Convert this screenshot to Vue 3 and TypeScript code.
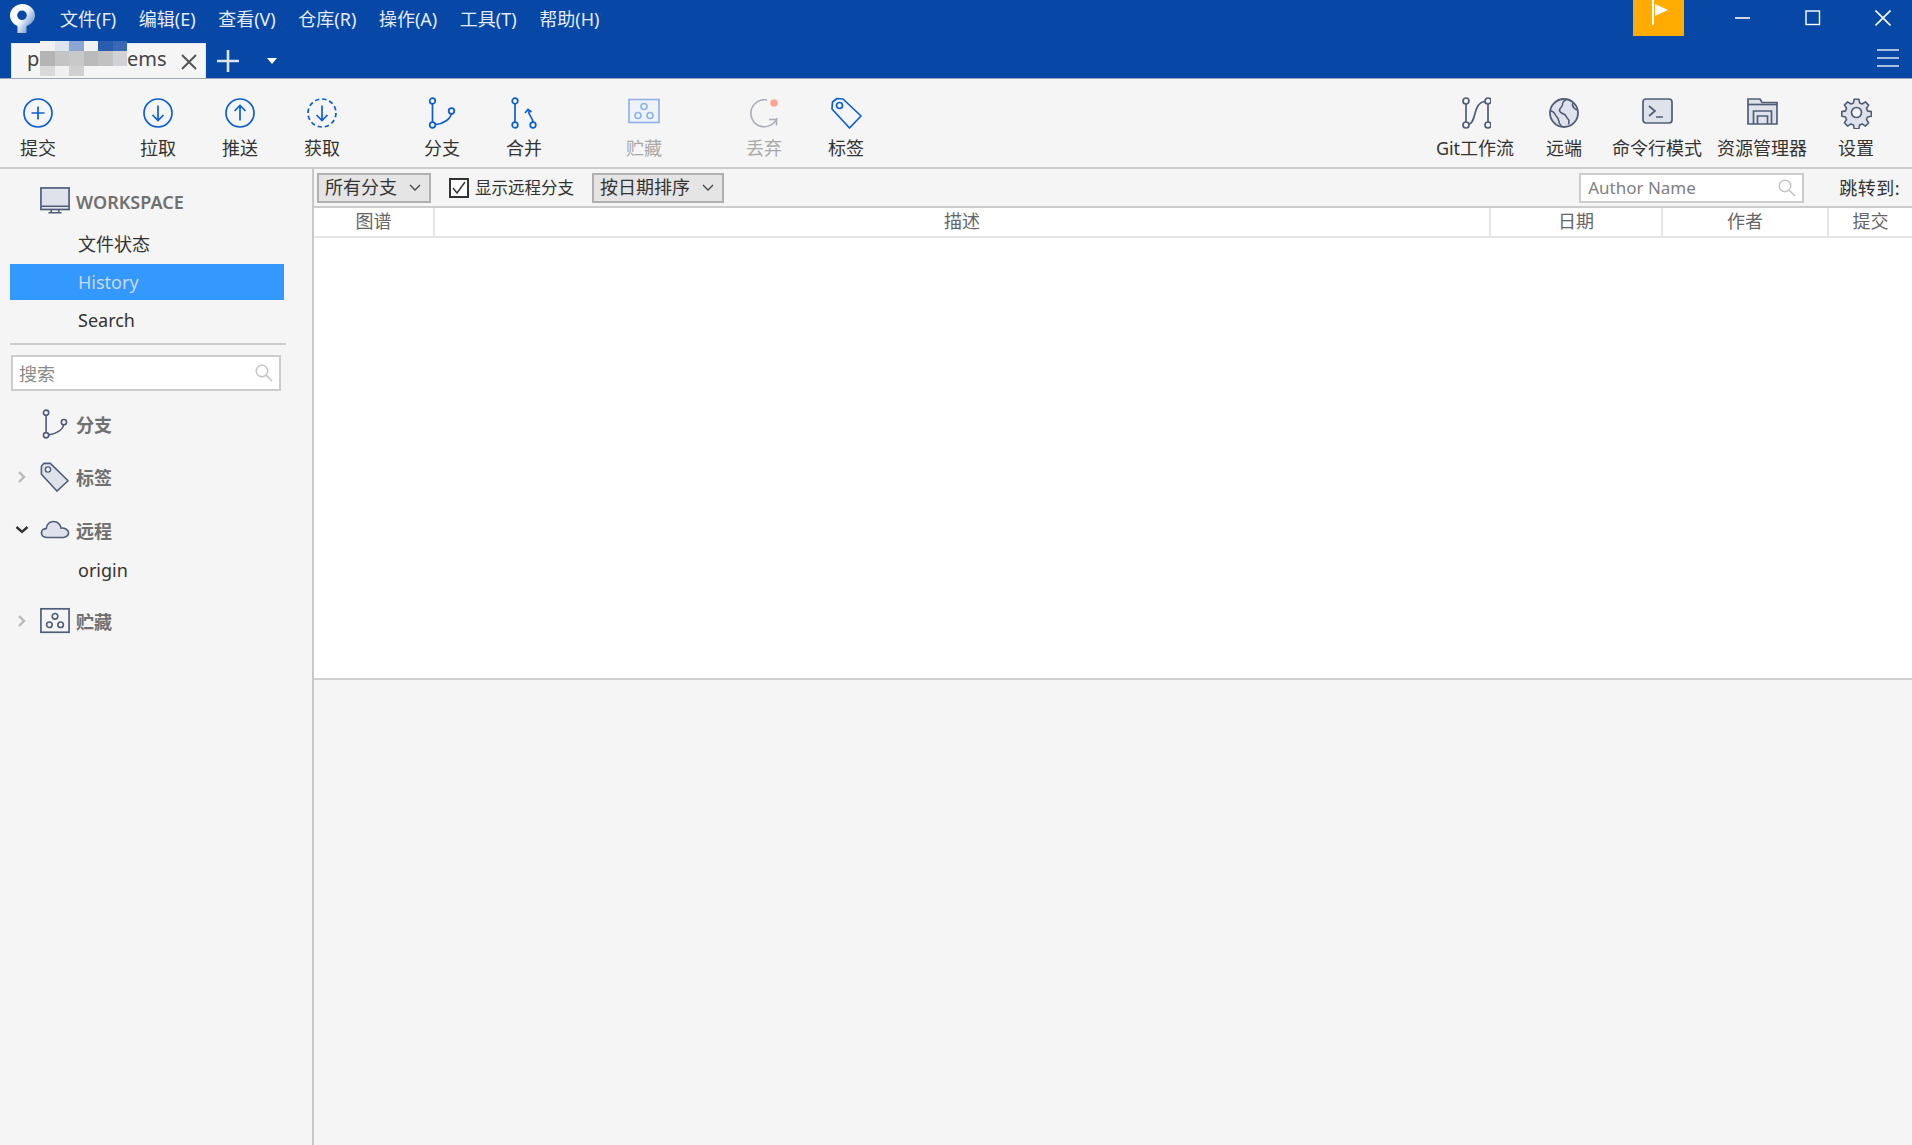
<script setup lang="ts">
// SourceTree-style repository window: title bar, toolbar, sidebar, history table
const MENUS = ['文件(F)', '编辑(E)', '查看(V)', '仓库(R)', '操作(A)', '工具(T)', '帮助(H)']

const BLUE = 'fill="none" stroke="#0c5fd0" stroke-width="1.7"'
const SLATE = 'fill="#dfe2ea" stroke="#4f5d78" stroke-width="1.7"'
const SLATE_LINE = 'fill="none" stroke="#4f5d78" stroke-width="1.7"'

const branch = (a: string) =>
  `<g ${a}><circle cx="6.5" cy="4" r="2.8"/><circle cx="6.5" cy="28" r="2.8"/><circle cx="25.5" cy="14" r="2.8"/><path d="M6.5 6.8V25.2M9.3 27.6C17 27 24.5 22 25.2 16.8"/></g>`

const ICONS: Record<string, string> = {
  commit: `<g ${BLUE}><circle cx="16" cy="16" r="14"/><path d="M16 9.5v13M9.5 16h13"/></g>`,
  pull: `<g ${BLUE}><circle cx="16" cy="16" r="14"/><path d="M16 8.5v15M10.5 18l5.5 5.5 5.5-5.5"/></g>`,
  push: `<g ${BLUE}><circle cx="16" cy="16" r="14"/><path d="M16 23.5v-15M10.5 14l5.5-5.5 5.5 5.5"/></g>`,
  fetch: `<g ${BLUE}><circle cx="16" cy="16" r="14" stroke-dasharray="4.4 2.9"/><path d="M16 8.5v15M10.5 18l5.5 5.5 5.5-5.5"/></g>`,
  branch: branch(BLUE),
  merge: `<g ${BLUE}><circle cx="7" cy="4" r="2.8"/><circle cx="7" cy="28" r="2.8"/><circle cx="25" cy="28" r="2.8"/><path d="M7 6.8v18.4M25 25.2c0-4-4-6-4.5-11M17 16l3-3.5 3.5 2.5"/></g>`,
  stash: `<g fill="none" stroke="#8fb0ea" stroke-width="1.6"><rect x="1" y="2.5" width="30" height="23" fill="#eef2f9"/><circle cx="16" cy="9.5" r="3"/><circle cx="10" cy="18.5" r="3"/><circle cx="22" cy="18.5" r="3"/></g>`,
  discard: `<g fill="none" stroke="#a8adb8" stroke-width="1.6"><path d="M19 3A13.5 13.5 0 1 0 29 21"/><path d="M21 22.5h7.5v6"/></g><circle cx="26" cy="6" r="3.8" fill="#ffa594"/>`,
  tag: `<g ${BLUE}><path d="M2.5 5 7 1.5 13 2 31 19 19.5 31 2 12Z" stroke-linejoin="round"/><circle cx="9.5" cy="8.5" r="3"/></g>`,
  flow: `<g ${SLATE_LINE}><circle cx="7" cy="4" r="3"/><circle cx="7" cy="28" r="3"/><circle cx="29" cy="4" r="3"/><circle cx="29" cy="28" r="3"/><path d="M7 7v18M29 7v18M9.8 27C18 26 13 6 26 4.5"/></g>`,
  remote: `<circle cx="16" cy="16" r="14" fill="#dfe2ea" stroke="#4f5d78" stroke-width="1.8"/><path d="M18 2.5c-2 2-4 2-3.5 5 .5 2-3 3-3 6 0 2 3 3 5 4s2 4 4 5c1 1 .5 3 0 5M2.5 14c3 0 4 2 5 4s3 3 3 5 1 4 3 6.5M25 6c-1 2 0 4 1 5s2 2 4 2" fill="none" stroke="#4f5d78" stroke-width="1.6"/>`,
  terminal: `<rect x="2" y="2" width="29" height="24" rx="3" ${SLATE}/><path d="M8 9l6 5-6 5M15 20h7" ${SLATE_LINE}/>`,
  explorer: `<path d="M2 27V2h12l2 3.500h15V27Z" ${SLATE}/><path d="M2 7.500h29" ${SLATE_LINE}/><path d="M7.500 27V14h18v13M11.500 27v-8h10v8" ${SLATE_LINE}/>`,
  settings: `<path d="M13.500 1.800h5l.8 4 2.700 1.100 3.400-2.300 3.500 3.500-2.300 3.400 1.100 2.700 4 .8v5l-4 .8-1.100 2.700 2.300 3.400-3.500 3.500-3.400-2.300-2.700 1.100-.8 4h-5l-.8-4-2.700-1.100-3.400 2.300-3.500-3.500 2.300-3.400-1.100-2.700-4-.8v-5l4-.8 1.100-2.700-2.300-3.400 3.500-3.500 3.400 2.300 2.700-1.100Z" ${SLATE} stroke-linejoin="round" transform="translate(1.500 .5) scale(.94)"/><circle cx="16.500" cy="15.500" r="5" fill="#f5f5f5" stroke="#4f5d78" stroke-width="1.7"/>`,
  monitor: `<rect x="1" y="1" width="30" height="23" fill="#dfe2ea" stroke="#4f5d78" stroke-width="1.8"/><path d="M1 20.500h30M9 27.500h14M12 24v3M20 24v3" ${SLATE_LINE}/>`,
  sideBranch: branch(SLATE_LINE),
  sideTag: `<path d="M1.500 4.500 4 1.500 11 1.500 30 20 18 31 1.500 13Z" ${SLATE} stroke-linejoin="round"/><circle cx="8.500" cy="8" r="2.800" fill="#f5f5f5" stroke="#4f5d78" stroke-width="1.500"/>`,
  cloud: `<path d="M8 24C3.500 24 1.500 21.500 1.500 19 1.500 16 4 14.500 6.500 14.500 7.500 9.500 11 7 14.500 7 19 7 22 10.500 22.500 14 26.500 13.500 30.500 16 30.500 19 30.500 22 27.500 24 25 24Z" ${SLATE}/>`,
  sideStash: `<rect x="1" y="3" width="30" height="25" fill="#f5f5f5" stroke="#4f5d78" stroke-width="1.800"/><g ${SLATE_LINE}><circle cx="16" cy="11" r="3"/><circle cx="10" cy="20" r="3"/><circle cx="22" cy="20" r="3"/></g>`,
}

interface Tool { label: string; icon: string; width: number; gap?: number; dim?: boolean }

const LEFT_TOOLS: Tool[] = [
  { label: '提交', icon: 'commit', width: 76 },
  { label: '拉取', icon: 'pull', width: 82, gap: 41 },
  { label: '推送', icon: 'push', width: 82 },
  { label: '获取', icon: 'fetch', width: 82 },
  { label: '分支', icon: 'branch', width: 82, gap: 38 },
  { label: '合并', icon: 'merge', width: 82 },
  { label: '贮藏', icon: 'stash', width: 82, gap: 38, dim: true },
  { label: '丢弃', icon: 'discard', width: 82, gap: 38, dim: true },
  { label: '标签', icon: 'tag', width: 82 },
]

const RIGHT_TOOLS: Tool[] = [
  { label: 'Git工作流', icon: 'flow', width: 96 },
  { label: '远端', icon: 'remote', width: 82 },
  { label: '命令行模式', icon: 'terminal', width: 104 },
  { label: '资源管理器', icon: 'explorer', width: 106 },
  { label: '设置', icon: 'settings', width: 82 },
]

// blurred-out part of the tab title
const MOSAIC = [
  ['#f1f1f1', '#dce3ef', '#8ba6d4', '#f2f2f2', '#2a5cae', '#3a68b4'],
  ['#b4b4b4', '#c4c4c4', '#c9c9c9', '#bababa', '#c2c2c2', '#d0d2d8'],
  ['#d9d9d9', '#f0f0f0', '#d0d0d0', 'transparent', 'transparent', 'transparent'],
]

const COLUMNS = [
  { label: '图谱', width: 121 },
  { label: '描述', width: 1056 },
  { label: '日期', width: 172 },
  { label: '作者', width: 166 },
  { label: '提交', width: 83 },
]
</script>

<template>
  <div class="app">
    <header class="titlebar">
      <div class="menu-row">
        <svg class="logo" viewBox="0 0 25 29">
          <defs>
            <linearGradient id="logo-fade" x1="0.45" y1="0.45" x2="1" y2="0.85">
              <stop offset="0" stop-color="#fff" />
              <stop offset="1" stop-color="#4f7cc4" />
            </linearGradient>
          </defs>
          <path fill="url(#logo-fade)" fill-rule="evenodd" d="M12.500 0C5.600 0 0 5.200 0 11.500c0 4.600 3 8.500 7.500 10.500V29h9v-7C21.500 20 25 16.200 25 11.500 25 5.200 19.400 0 12.500 0Zm-.5 6.500a4.800 4.800 0 1 1 0 9.600 4.800 4.800 0 0 1 0-9.600Z" />
        </svg>
        <nav class="menus">
          <span v-for="m in MENUS" :key="m" class="menu">{{ m }}</span>
        </nav>
        <div class="flag">
          <svg width="16" height="25" viewBox="0 0 16 25">
            <path d="M1 0v25" stroke="#fff" stroke-width="2" />
            <path fill="#fff" d="M3 4l13 6-13 6z" />
          </svg>
        </div>
        <div class="win-controls">
          <svg width="16" height="16" viewBox="0 0 16 16"><path d="M0 8h15" stroke="#fff" stroke-width="1.600" /></svg>
          <svg width="16" height="16" viewBox="0 0 16 16"><rect x="1" y="1" width="13.500" height="13.500" fill="none" stroke="#fff" stroke-width="1.400" /></svg>
          <svg width="16" height="16" viewBox="0 0 16 16"><path d="M.5.5l15 15M15.500.5l-15 15" stroke="#fff" stroke-width="1.600" /></svg>
        </div>
      </div>
      <div class="tab-row">
        <div class="tab">
          <span class="tab-title">p</span>
          <span class="tab-title tab-end">ems</span>
          <svg class="tab-close" width="16" height="16" viewBox="0 0 16 16"><path d="M1 1l14 14M15 1L1 15" stroke="#555" stroke-width="2" /></svg>
          <div class="mosaic">
            <template v-for="(row, r) in MOSAIC" :key="r">
              <i v-for="(c, i) in row" :key="i" :style="{ background: c }"></i>
            </template>
          </div>
        </div>
        <svg class="tab-plus" width="22" height="22" viewBox="0 0 22 22"><path d="M11 0v22M0 11h22" stroke="#dfe6f3" stroke-width="2.600" /></svg>
        <span class="tab-caret"></span>
        <svg class="hamburger" width="22" height="18" viewBox="0 0 22 18"><path d="M0 1h22M0 9h22M0 17h22" stroke="#dfe6f3" stroke-width="1.600" /></svg>
      </div>
    </header>

    <section class="toolbar">
      <div v-for="t in LEFT_TOOLS" :key="t.label" class="tool" :class="{ dim: t.dim }" :style="{ width: t.width + 'px', marginLeft: (t.gap ?? 0) + 'px' }">
        <svg class="tool-icon" viewBox="0 0 32 32" v-html="ICONS[t.icon]"></svg>
        <span>{{ t.label }}</span>
      </div>
      <div class="tools-right">
        <div v-for="t in RIGHT_TOOLS" :key="t.label" class="tool" :style="{ width: t.width + 'px' }">
          <svg class="tool-icon" viewBox="0 0 32 32" v-html="ICONS[t.icon]"></svg>
          <span>{{ t.label }}</span>
        </div>
      </div>
    </section>

    <div class="body">
      <aside class="sidebar">
        <div class="side-head workspace">
          <svg class="side-icon" viewBox="0 0 32 32" v-html="ICONS.monitor"></svg>
          <span class="ws-label">WORKSPACE</span>
        </div>
        <div class="side-item">文件状态</div>
        <div class="side-item active">History</div>
        <div class="side-item">Search</div>
        <div class="side-divider"></div>
        <div class="side-search">
          <span>搜索</span>
          <svg width="18" height="18" viewBox="0 0 18 18"><circle cx="7" cy="7" r="5.800" fill="none" stroke="#c4c4c4" stroke-width="1.400" /><path d="M11.200 11.200 17 17" stroke="#c4c4c4" stroke-width="1.600" /></svg>
        </div>

        <div class="side-head group first">
          <svg class="side-icon" viewBox="0 0 32 32" v-html="ICONS.sideBranch"></svg>
          <span>分支</span>
        </div>
        <div class="side-head group">
          <svg class="chev" width="10" height="14" viewBox="0 0 10 14"><path d="M2 2l5 5-5 5" fill="none" stroke="#bbb" stroke-width="2.400" /></svg>
          <svg class="side-icon" viewBox="0 0 32 32" v-html="ICONS.sideTag"></svg>
          <span>标签</span>
        </div>
        <div class="side-head group">
          <svg class="chev down" width="14" height="10" viewBox="0 0 14 10"><path d="M1.500 2l5.500 5 5.500-5" fill="none" stroke="#333" stroke-width="2.400" /></svg>
          <svg class="side-icon" viewBox="0 0 32 32" v-html="ICONS.cloud"></svg>
          <span>远程</span>
        </div>
        <div class="side-item origin">origin</div>
        <div class="side-head group stash">
          <svg class="chev" width="10" height="14" viewBox="0 0 10 14"><path d="M2 2l5 5-5 5" fill="none" stroke="#bbb" stroke-width="2.400" /></svg>
          <svg class="side-icon" viewBox="0 0 32 32" v-html="ICONS.sideStash"></svg>
          <span>贮藏</span>
        </div>
      </aside>

      <main class="main">
        <div class="filters">
          <div class="select first-select">
            <span>所有分支</span>
            <svg width="12" height="8" viewBox="0 0 12 8"><path d="M1 1l5 5 5-5" fill="none" stroke="#444" stroke-width="1.300" /></svg>
          </div>
          <label class="check">
            <span class="box"><svg width="16" height="16" viewBox="0 0 16 16"><path d="M2 8l4 5 8-11" fill="none" stroke="#333" stroke-width="1.400" /></svg></span>
            <span class="check-label">显示远程分支</span>
          </label>
          <div class="select second-select">
            <span>按日期排序</span>
            <svg width="12" height="8" viewBox="0 0 12 8"><path d="M1 1l5 5 5-5" fill="none" stroke="#444" stroke-width="1.300" /></svg>
          </div>
          <div class="author">
            <span>Author Name</span>
            <svg width="18" height="18" viewBox="0 0 18 18"><circle cx="7" cy="7" r="5.800" fill="none" stroke="#c4c4c4" stroke-width="1.400" /><path d="M11.200 11.200 17 17" stroke="#c4c4c4" stroke-width="1.600" /></svg>
          </div>
          <span class="jump">跳转到:</span>
        </div>
        <div class="table-pane">
          <div class="table-head">
            <div v-for="c in COLUMNS" :key="c.label" class="col" :style="{ width: c.width + 'px' }">{{ c.label }}</div>
          </div>
        </div>
        <div class="detail-pane"></div>
      </main>
    </div>
  </div>
</template>

<style scoped>
.app {
  width: 1912px;
  height: 1145px;
  display: flex;
  flex-direction: column;
  overflow: hidden;
  background: #f5f5f5;
  font-family: "Noto Sans", "Noto Sans CJK SC", sans-serif;
  font-size: 18px;
  color: #333;
}
.titlebar {
  height: 78px;
  flex: none;
  background: #0747a6;
  color: #fff;
}
.menu-row {
  height: 43px;
  display: flex;
  align-items: flex-start;
}
.logo {
  width: 25px;
  height: 29px;
  margin: 4px 0 0 10px;
  flex: none;
}
.menus {
  display: flex;
  gap: 22.600px;
  margin-left: 25px;
  height: 36px;
  align-items: center;
}
.menu {
  color: #e6ecf6;
  white-space: nowrap;
}
.flag {
  width: 51px;
  height: 36px;
  margin-left: auto;
  padding-left: 3px;
  box-sizing: border-box;
  background: #ffab00;
  display: flex;
  justify-content: center;
  align-items: flex-start;
  flex: none;
}
.win-controls {
  display: flex;
  gap: 54px;
  height: 36px;
  align-items: center;
  padding: 0 21px 0 51px;
}
.tab-row {
  height: 35px;
  display: flex;
  align-items: center;
  position: relative;
}
.tab {
  position: relative;
  width: 195px;
  height: 35px;
  margin-left: 11px;
  background: #f5f5f5;
  border: 1px solid #e2e6ee;
  border-bottom: 0;
  box-sizing: border-box;
  color: #444;
  font-size: 20px;
  flex: none;
}
.tab-title {
  position: absolute;
  left: 15px;
  top: 1px;
}
.tab-end {
  left: 115px;
}
.tab-close {
  position: absolute;
  left: 169px;
  top: 10px;
}
.mosaic {
  position: absolute;
  left: 28px;
  top: -3px;
  width: 87px;
  height: 35px;
  display: grid;
  grid-template-columns: repeat(6, 1fr);
  grid-template-rows: 10px 15px 10px;
}
.tab-plus {
  margin-left: 11px;
  flex: none;
}
.tab-caret {
  width: 0;
  height: 0;
  margin-left: 28px;
  border-left: 5px solid transparent;
  border-right: 5px solid transparent;
  border-top: 6px solid #fff;
}
.hamburger {
  margin: 0 13px 5px auto;
  flex: none;
}
.toolbar {
  height: 91px;
  flex: none;
  display: flex;
  box-sizing: border-box;
  border-top: 1px solid #9aa5b8;
  border-bottom: 2px solid #ccc;
  padding-top: 18px;
}
.tool {
  display: flex;
  flex-direction: column;
  align-items: center;
  flex: none;
  white-space: nowrap;
}
.tool-icon {
  width: 32px;
  height: 32px;
  margin-bottom: 5px;
}
.tool.dim {
  color: #a9a9a9;
}
.tools-right {
  display: flex;
  margin-left: auto;
  padding-right: 15px;
}
.body {
  flex: 1;
  display: flex;
  min-height: 0;
}
.sidebar {
  width: 314px;
  flex: none;
  box-sizing: border-box;
  border-right: 2px solid #c8c8c8;
  display: flex;
  flex-direction: column;
  padding-top: 18px;
}
.side-head {
  position: relative;
  display: flex;
  align-items: center;
  height: 30px;
  padding-left: 40px;
  gap: 6px;
  font-weight: 700;
  color: #707070;
}
.ws-label {
  font-weight: 600;
}
.side-icon {
  width: 30px;
  height: 30px;
  flex: none;
}
.workspace {
  margin-bottom: 8px;
}
.side-item {
  height: 36px;
  line-height: 36px;
  margin: 1px 0 1px 10px;
  width: 274px;
  padding-left: 68px;
  box-sizing: border-box;
  color: #333;
}
.side-item.active {
  background: #3399ff;
  color: #cbd8ea;
}
.side-divider {
  height: 2px;
  width: 276px;
  margin: 4px 0 0 10px;
  background: #ccc;
}
.side-search {
  margin: 10px 0 0 11px;
  width: 270px;
  height: 36px;
  box-sizing: border-box;
  border: 2px solid #ccc;
  background: #fff;
  display: flex;
  align-items: center;
  justify-content: space-between;
  padding: 0 6px;
  color: #8a8a8a;
}
.group {
  margin-top: 23px;
}
.first {
  margin-top: 18px;
}
.chev {
  position: absolute;
  left: 17px;
  top: 8px;
}
.chev.down {
  left: 15px;
  top: 10px;
}
.origin {
  margin-top: 7px;
}
.stash {
  margin-top: 17px;
}
.main {
  flex: 1;
  min-width: 0;
  display: flex;
  flex-direction: column;
}
.filters {
  height: 37px;
  flex: none;
  display: flex;
  align-items: center;
  padding-left: 3px;
  box-sizing: border-box;
}
.select {
  height: 30px;
  box-sizing: border-box;
  border: 2px solid #b0b0b0;
  background: #e5e5e5;
  display: flex;
  align-items: center;
  justify-content: space-between;
  padding: 0 8px 0 6px;
  flex: none;
}
.select span {
  padding-bottom: 4px;
}
.first-select {
  width: 114px;
}
.second-select {
  width: 132px;
}
.check {
  display: flex;
  align-items: center;
  gap: 6px;
  margin: 0 18px;
  font-size: 16.500px;
}
.check-label {
  padding-bottom: 2px;
}
.box {
  width: 20px;
  height: 20px;
  box-sizing: border-box;
  border: 2px solid #333;
  background: #fff;
  display: flex;
  align-items: center;
  justify-content: center;
}
.author {
  width: 225px;
  height: 30px;
  box-sizing: border-box;
  margin-left: auto;
  border: 2px solid #ccc;
  background: #fff;
  display: flex;
  align-items: center;
  justify-content: space-between;
  padding: 0 6px 0 7px;
  color: #808080;
  font-size: 17px;
}
.jump {
  margin: 0 12px 0 35px;
  padding-bottom: 2px;
  letter-spacing: 0.500px;
  white-space: nowrap;
}
.table-pane {
  height: 474px;
  flex: none;
  background: #fff;
  box-sizing: border-box;
  border-bottom: 2px solid #d0d0d0;
}
.table-head {
  display: flex;
  height: 32px;
  box-sizing: border-box;
  border-top: 2px solid #ccc;
  border-bottom: 2px solid #e5e5e5;
}
.col {
  box-sizing: border-box;
  border-right: 2px solid #e5e5e5;
  text-align: center;
  color: #666;
  line-height: 26px;
  flex: none;
}
.col:last-child {
  border-right: 0;
}
.detail-pane {
  flex: 1;
  background: #f5f5f5;
}
</style>
